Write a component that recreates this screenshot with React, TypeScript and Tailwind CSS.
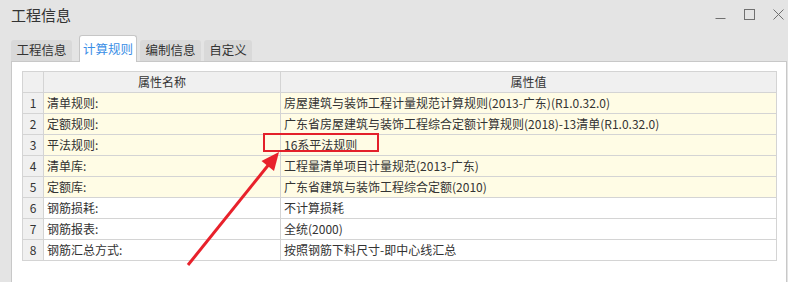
import React from "react";

/* ---------- Data ---------- */
const rows = [
  { name: "清单规则:", value: "房屋建筑与装饰工程计量规范计算规则(2013-广东)(R1.0.32.0)", hl: true },
  { name: "定额规则:", value: "广东省房屋建筑与装饰工程综合定额计算规则(2018)-13清单(R1.0.32.0)", hl: true },
  { name: "平法规则:", value: "16系平法规则", hl: true },
  { name: "清单库:", value: "工程量清单项目计量规范(2013-广东)", hl: true },
  { name: "定额库:", value: "广东省建筑与装饰工程综合定额(2010)", hl: true },
  { name: "钢筋损耗:", value: "不计算损耗", hl: false },
  { name: "钢筋报表:", value: "全统(2000)", hl: false },
  { name: "钢筋汇总方式:", value: "按照钢筋下料尺寸-即中心线汇总", hl: false },
];

const tabs = [
  { label: "工程信息", w: "w-[61px]" },
  { label: "计算规则", w: "w-[58px]" },
  { label: "编制信息", w: "w-[61px]" },
  { label: "自定义", w: "w-[48px]" },
];

/* ---------- Component ---------- */
export default function App() {
  return (
    <div
      className="relative w-[788px] h-[282px] overflow-hidden bg-[#e4e4e4] text-[#333]"
      style={{ fontFamily: '"Noto Sans CJK SC", "Noto Sans", sans-serif' }}
    >
      {/* Title bar */}
      <div className="flex h-[35px] items-start justify-between">
        <div className="pl-[11px] pt-[5px] text-[15px] leading-[20px] text-[#333]">工程信息</div>
        <div className="flex items-center gap-[18px] pr-[4px] pt-[9px]">
          <svg width="11" height="11" viewBox="0 0 11 11">
            <path d="M0.5 9.5H10.5" stroke="#707070" strokeWidth="1" />
          </svg>
          <svg width="11" height="11" viewBox="0 0 11 11">
            <rect x="0.5" y="0.5" width="10" height="10" fill="none" stroke="#707070" strokeWidth="1" />
          </svg>
          <svg width="11" height="11" viewBox="0 0 11 11">
            <path d="M0.5 0.5L10.5 10.5M10.5 0.5L0.5 10.5" stroke="#707070" strokeWidth="1" />
          </svg>
        </div>
      </div>

      {/* Tabs */}
      <div className="flex h-[26px] items-end pl-[11px]">
        {tabs.map((t, i) =>
          i === 1 ? (
            <div
              key={t.label}
              className={`relative z-10 -mb-px ml-[4px] mr-[3px] flex h-[27px] ${t.w} items-center justify-center rounded-t-[3px] border border-b-0 border-[#c6c6c6] bg-white text-[12.5px] text-[#3a8ee6]`}
            >
              {t.label}
            </div>
          ) : (
            <div
              key={t.label}
              className={`mr-[3px] flex h-[21px] ${t.w} items-center justify-center rounded-t-[3px] bg-[#d9d9d9] text-[12.5px] text-[#333]`}
            >
              {t.label}
            </div>
          )
        )}
      </div>

      {/* Panel */}
      <div className="ml-[11px] mr-[1px] h-[230px] border border-[#c8c8c8] bg-white pl-[10px] pr-[9px] pt-[9px]">
        <table className="w-[755px] table-fixed border-collapse text-[12px] leading-[20px]">
          <colgroup>
            <col className="w-[21px]" />
            <col className="w-[237px]" />
            <col />
          </colgroup>
          <thead>
            <tr className="h-[20px] bg-[#f0f0f0]">
              <th className="border border-[#d4d4d4] font-normal"></th>
              <th className="border border-[#d4d4d4] text-center font-normal">属性名称</th>
              <th className="border border-[#d4d4d4] text-center font-normal">属性值</th>
            </tr>
          </thead>
          <tbody>
            {rows.map((r, i) => (
              <tr key={r.name} className={`h-[21px] ${r.hl ? "bg-[#fffce5]" : "bg-white"}`}>
                <td className="border border-[#d4d4d4] bg-[#f0f0f0] text-center">{i + 1}</td>
                <td className="border border-[#d4d4d4] pl-[3px] whitespace-nowrap">{r.name}</td>
                <td className="border border-[#d4d4d4] pl-[3px] whitespace-nowrap overflow-hidden">{r.value}</td>
              </tr>
            ))}
          </tbody>
        </table>
      </div>

      {/* Annotation: red box */}
      <div className="absolute left-[263px] top-[133px] h-[19px] w-[116px] border-2 border-[#e3202a]" />

      {/* Annotation: arrow */}
      <svg className="absolute left-0 top-0" width="788" height="282" viewBox="0 0 788 282">
        <line x1="188" y1="265" x2="270" y2="163" stroke="#e8212b" strokeWidth="3" />
        <polygon points="279,152 261.5,161 274,171" fill="#e8212b" />
      </svg>
    </div>
  );
}
